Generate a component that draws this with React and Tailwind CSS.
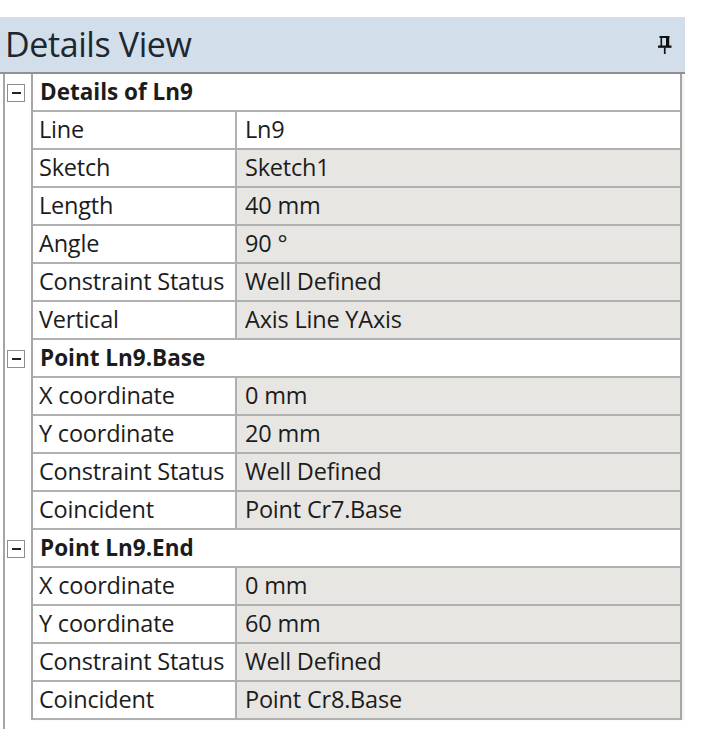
import React from "react";

const groups = [
  {
    title: "Details of Ln9",
    rows: [
      ["Line", "Ln9", true],
      ["Sketch", "Sketch1"],
      ["Length", "40 mm"],
      ["Angle", "90 °"],
      ["Constraint Status", "Well Defined"],
      ["Vertical", "Axis Line YAxis"],
    ],
  },
  {
    title: "Point Ln9.Base",
    rows: [
      ["X coordinate", "0 mm"],
      ["Y coordinate", "20 mm"],
      ["Constraint Status", "Well Defined"],
      ["Coincident", "Point Cr7.Base"],
    ],
  },
  {
    title: "Point Ln9.End",
    rows: [
      ["X coordinate", "0 mm"],
      ["Y coordinate", "60 mm"],
      ["Constraint Status", "Well Defined"],
      ["Coincident", "Point Cr8.Base"],
    ],
  },
];

function Pin() {
  return (
    <svg width="14" height="18" viewBox="0 0 14 18" className="block">
      <rect x="1.5" y="0" width="10" height="2" fill="#111" />
      <rect x="2.5" y="2" width="1.6" height="8" fill="#111" />
      <rect x="8" y="2" width="3.2" height="8" fill="#111" />
      <rect x="0" y="9.5" width="13.5" height="2.3" fill="#111" />
      <rect x="5.9" y="11.5" width="1.7" height="6.5" fill="#111" />
    </svg>
  );
}

function MinusBox() {
  return (
    <div className="ml-[2px] w-[18px] h-[18px] border border-[#8e8e8e] bg-white flex items-center justify-center">
      <div className="w-[9px] h-[2px] bg-[#222]" />
    </div>
  );
}

export default function App() {
  const items = [];
  groups.forEach((g, gi) => {
    items.push({ type: "group", title: g.title, key: "g" + gi });
    g.rows.forEach((r, ri) =>
      items.push({ type: "row", name: r[0], value: r[1], white: !!r[2], key: "r" + gi + "-" + ri })
    );
  });

  return (
    <div
      className="w-[709px] h-[729px] bg-white pt-[17px] text-[#1c1c1c]"
      style={{ fontFamily: '"Open Sans", "Noto Sans", sans-serif' }}
    >
      <div className="w-[685px] h-[57px] bg-[#d2dfeb] border-b-2 border-[#929292] flex items-center justify-between pl-[5px] pr-[13px]">
        <span className="text-[34px] leading-none text-[#20262e] tracking-[-0.4px] pb-[2px]">Details View</span>
        <Pin />
      </div>
      <div className="flex ml-[3px] h-[655px]">
        <div className="w-[28px] border-l-2 border-[#a6a6a6] flex flex-col">
          {items.map((it) => (
            <div key={it.key} className="h-[38px] shrink-0 flex items-center">
              {it.type === "group" ? <MinusBox /> : null}
            </div>
          ))}
        </div>
        <div className="w-[651px] self-start border-l-2 border-r-2 border-[#a6a6a6] flex flex-col shadow-[2px_0_2px_rgba(0,0,0,0.06)]">
          {items.map((it) =>
            it.type === "group" ? (
              <div
                key={it.key}
                className="h-[38px] border-b-2 border-[#b0b0b0] bg-white flex items-center pl-[7px] text-[22.5px] font-bold"
              >
                {it.title}
              </div>
            ) : (
              <div key={it.key} className="h-[38px] border-b-2 border-[#b0b0b0] flex text-[23.5px]">
                <div className="w-[204px] border-r-2 border-[#b0b0b0] bg-white flex items-center pl-[6px] whitespace-nowrap tracking-[-0.2px]">
                  {it.name}
                </div>
                <div
                  className={
                    "flex-1 flex items-center pl-[8px] whitespace-nowrap tracking-[-0.2px] " +
                    (it.white ? "bg-white" : "bg-[#e7e6e3]")
                  }
                >
                  {it.value}
                </div>
              </div>
            )
          )}
        </div>
      </div>
    </div>
  );
}
